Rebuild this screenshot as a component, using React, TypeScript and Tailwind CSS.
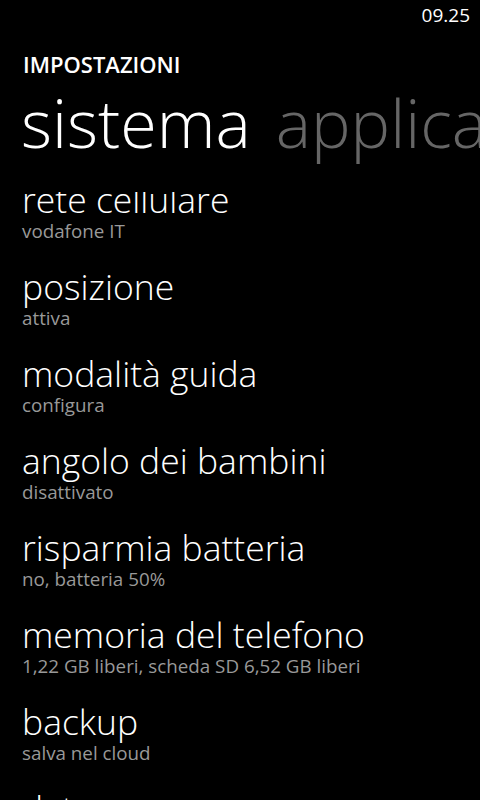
const items = [
  { title: 'rete cellulare', sub: 'vodafone IT' },
  { title: 'posizione', sub: 'attiva' },
  { title: 'modalità guida', sub: 'configura' },
  { title: 'angolo dei bambini', sub: 'disattivato' },
  { title: 'risparmia batteria', sub: 'no, batteria 50%' },
  { title: 'memoria del telefono', sub: '1,22 GB liberi, scheda SD 6,52 GB liberi' },
  { title: 'backup', sub: 'salva nel cloud' },
  { title: 'data e ora', sub: 'UTC+01:00 Amsterdam, Berlino, Roma' },
];

function SettingRow({ title, sub }: { title: string; sub: string }) {
  return (
    <div className="h-[87px] pl-[22px]">
      <div className="whitespace-nowrap text-[35.5px] font-light leading-[40px] text-white">{title}</div>
      <div className="mt-[1px] whitespace-nowrap text-[18.8px] leading-[22px] text-[#999999]">{sub}</div>
    </div>
  );
}

export default function App() {
  return (
    <div
      className="flex h-[800px] w-[480px] flex-col overflow-hidden bg-black text-white"
      style={{ fontFamily: '"Open Sans", "Noto Sans", sans-serif' }}
    >
      {/* status bar */}
      <div className="flex justify-end pr-[10px] pt-[3px] text-[19px] leading-[24px]">09.25</div>

      {/* app title */}
      <div className="mt-[23px] pl-[23px] text-[22px] font-semibold leading-[28px]">IMPOSTAZIONI</div>

      {/* pivot headers */}
      <div className="mt-[8px] flex gap-[25px] whitespace-nowrap pl-[21px] text-[66.5px] font-light leading-[72px]">
        <span className="text-white">sistema</span>
        <span className="text-[#666666]">applicazioni</span>
      </div>

      {/* list, scrolled a little under the header */}
      <div className="mt-[34px] flex-1 overflow-hidden">
        <div className="-mt-[13px]">
          {items.map((it) => (
            <SettingRow key={it.title} title={it.title} sub={it.sub} />
          ))}
        </div>
      </div>
    </div>
  );
}
